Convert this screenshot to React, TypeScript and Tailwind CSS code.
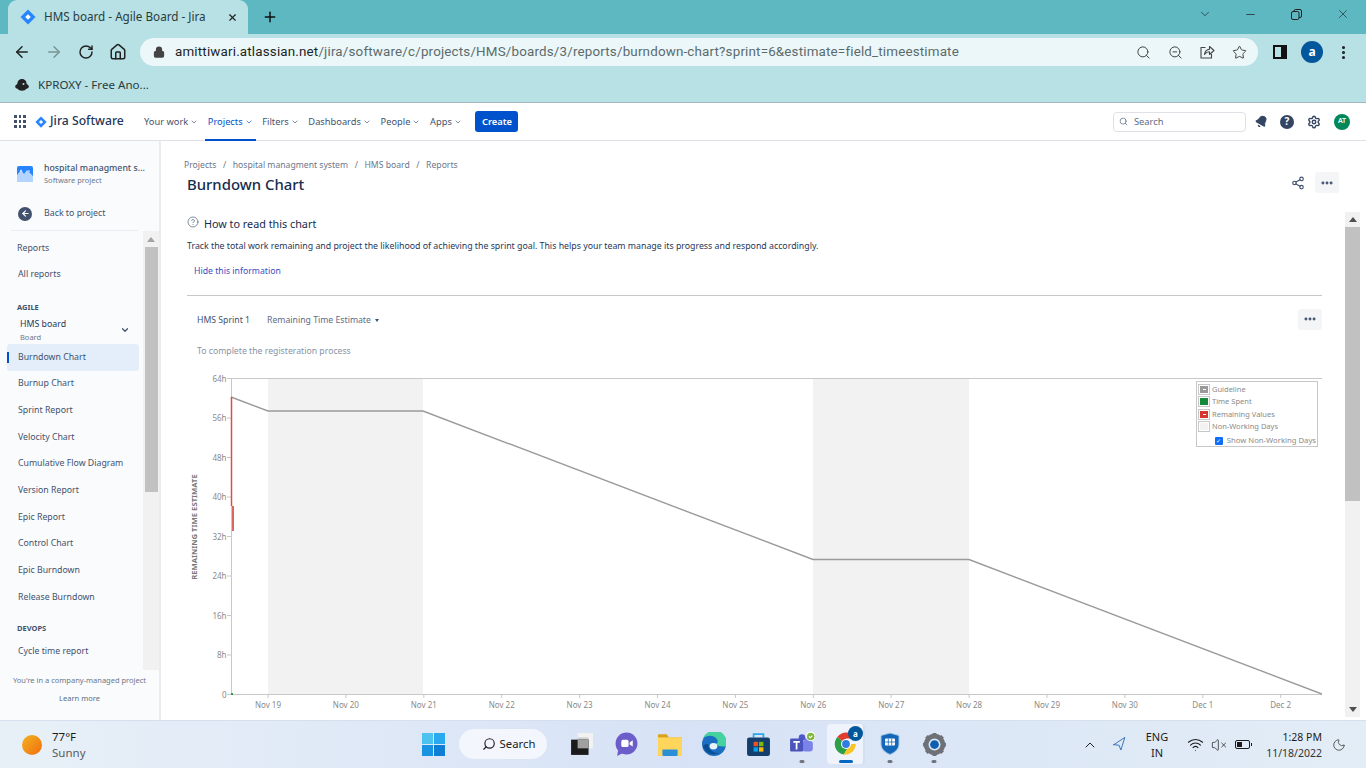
import React from 'react';
import { ArrowLeft, ArrowRight, RotateCw, Home, Lock, Search, ZoomOut, Star, MoreVertical, X, Plus, ChevronDown, ChevronUp, Minus, Share2, MoreHorizontal, Bell, Settings, HelpCircle, Wifi, VolumeX, Moon, Navigation } from 'lucide-react';

const F = "font-['Noto_Sans',sans-serif]";

function Diamond({ s = 16, c = '#2684ff' }: { s?: number; c?: string }) {
  return (
    <svg width={s} height={s} viewBox="0 0 16 16" className="shrink-0">
      <path d="M8 0.5 15.5 8 8 15.5 0.5 8Z" fill={c} />
      <path d="M8 5.2 10.8 8 8 10.8 5.2 8Z" fill="#fff" />
    </svg>
  );
}

function Tabs() {
  return (
    <div className="h-[34px] bg-[#5db8c2] flex items-end shrink-0">
      <div className="ml-[8px] w-[240px] h-[34px] bg-[#b7e1e5] rounded-t-[9px] flex items-center pl-[12px] pr-[10px]">
        <Diamond s={16} c="#2684ff" />
        <span className="ml-[8px] text-[11.7px] text-[#2a3b3d] flex-1 whitespace-nowrap">HMS board - Agile Board - Jira</span>
        <X size={11} strokeWidth={2.5} className="text-[#222]" />
      </div>
      <div className="h-[34px] flex items-center ml-[14px]">
        <Plus size={16} strokeWidth={2.2} className="text-[#111]" />
      </div>
      <div className="flex-1" />
      <div className="h-[34px] flex items-center text-[#222] pb-[6px]">
        <ChevronDown size={14} strokeWidth={1.2} />
        <Minus size={13} strokeWidth={1.4} className="ml-[32px]" />
        <svg width="11" height="11" viewBox="0 0 11 11" fill="none" stroke="#222" className="ml-[34px]"><rect x="0.5" y="2.5" width="7.5" height="8" rx="1.5" /><path d="M3 2.5V2a1.5 1.5 0 0 1 1.5-1.5H9A1.5 1.5 0 0 1 10.5 2v5A1.5 1.5 0 0 1 9 8.5H8" /></svg>
        <X size={14} strokeWidth={1.1} className="ml-[34px] mr-[16px]" />
      </div>
    </div>
  );
}

function Toolbar() {
  return (
    <div className="h-[34px] bg-[#b7e1e5] flex items-center shrink-0 pl-[13px] pt-[2px]">
      <ArrowLeft size={18} strokeWidth={2} className="text-[#222]" />
      <ArrowRight size={18} strokeWidth={2} className="text-[#7b9294] ml-[14px]" />
      <RotateCw size={16} strokeWidth={2.2} className="text-[#222] ml-[15px]" />
      <Home size={18} strokeWidth={2} className="text-[#222] ml-[15px]" />
      <div className="ml-[13px] w-[1118px] h-[28px] bg-[#ebf7f8] rounded-full flex items-center pl-[13px] pr-[11px] shrink-0">
        <Lock size={12} strokeWidth={2.5} className="text-[#444]" fill="#444" />
        <span className="ml-[10px] text-[13.4px] whitespace-nowrap flex-1 font-['Roboto',sans-serif] tracking-[0.17px] text-[#5c6b6d]">
          <span className="text-[#1c2526]">amittiwari.atlassian.net</span>/jira/software/c/projects/HMS/boards/3/reports/burndown-chart?sprint=6&amp;estimate=field_timeestimate
        </span>
        <Search size={15} strokeWidth={1.6} className="text-[#444]" />
        <ZoomOut size={15} strokeWidth={1.6} className="text-[#444] ml-[17px]" />
        <svg width="16" height="16" viewBox="0 0 16 16" fill="none" stroke="#444" strokeWidth="1.1" strokeLinejoin="round" className="ml-[16px]"><path d="M6.5 3.5H2v10.5h10.5V10" /><path d="M5.5 10.5C6 7.5 8 5.5 10.5 5.3V2.5l4.5 4-4.5 4V7.8c-2 0-3.8 1-5 2.7Z" /></svg>
        <Star size={15} strokeWidth={1.6} className="text-[#444] ml-[17px]" />
      </div>
      <div className="ml-[15px] w-[14px] h-[14px] border-[2px] border-[#111] border-r-[6px] shrink-0" />
      <div className="ml-[14px] w-[22px] h-[22px] rounded-full bg-[#01579b] text-white text-[12px] font-bold flex items-center justify-center shrink-0">a</div>
      <MoreVertical size={17} strokeWidth={2.4} className="text-[#222] ml-[12px] shrink-0" />
    </div>
  );
}

function Bookmarks() {
  return (
    <div className="h-[35px] bg-[#b7e1e5] border-b border-[#9fb9bc] flex items-center shrink-0 pl-[15px]">
      <svg width="14" height="12" viewBox="0 0 14 12"><path d="M7 0C3.8 0 2.4 2.4 2.4 5 1.2 5.4.2 6.4.2 7.8c0 1.2 1.4 1.8 2.4 2 .6 1.2 2.4 2 4.4 2s3.6-.8 4.4-2c1-.2 2.4-.8 2.4-2 0-1.4-1-2.4-2.2-2.8C11.6 2.4 10.2 0 7 0Z" fill="#222" /><circle cx="8.5" cy="5" r="1" fill="#b7e1e5" /></svg>
      <span className="ml-[9px] text-[11.6px] text-[#2a3b3d]">KPROXY - Free Ano...</span>
    </div>
  );
}

function JiraNav() {
  const items = ['Your work', 'Projects', 'Filters', 'Dashboards', 'People', 'Apps'];
  return (
    <div className="h-[38px] bg-white border-b border-[#dfe1e6] flex items-center shrink-0 relative">
      <div className="ml-[14px] grid grid-cols-3 gap-[2px]">
        {Array.from({ length: 9 }).map((_, i) => <div key={i} className="w-[2.7px] h-[2.7px] bg-[#42526e]" />)}
      </div>
      <div className="ml-[9px]"><Diamond s={12} c="#2684ff" /></div>
      <span className="ml-[3px] text-[12.2px] text-[#253858] font-medium w-[90px] whitespace-nowrap">Jira Software</span>
      <div className="flex items-stretch h-[38px] ml-[1px]">
        {items.map((t) => (
          <div key={t} className={`relative flex items-center pr-[6.6px] pl-[3px] pt-[1px] text-[9.3px] ${t === 'Projects' ? 'text-[#0052cc]' : 'text-[#42526e]'}`}>
            <span>{t}</span>
            <ChevronDown size={8} className="ml-[2px]" />
            {t === 'Projects' && <div className="absolute left-0 right-[3px] bottom-0 h-[2px] bg-[#0052cc]" />}
          </div>
        ))}
      </div>
      <div className="ml-[7px] w-[43px] h-[21px] rounded-[3px] bg-[#0052cc] text-white text-[9.3px] font-semibold flex items-center justify-center">Create</div>
      <div className="flex-1" />
      <div className="w-[133px] h-[20px] border-[1.5px] border-[#dfe1e6] rounded-[4px] flex items-center pl-[5px]">
        <Search size={9} className="text-[#5e6c84]" />
        <span className="ml-[6px] text-[9.3px] text-[#5e6c84]">Search</span>
      </div>
      <Bell size={13} fill="#344563" className="text-[#344563] ml-[9px] rotate-[30deg]" />
      <div className="ml-[12px] w-[14px] h-[14px] rounded-full bg-[#344563] text-white text-[10px] font-bold flex items-center justify-center">?</div>
      <Settings size={14} strokeWidth={2.4} className="text-[#344563] ml-[13px]" />
      <div className="ml-[13px] mr-[16px] w-[16px] h-[16px] rounded-full bg-[#00875a] text-white text-[7px] font-semibold flex items-center justify-center">AT</div>
    </div>
  );
}

function SideRow({ t, active }: { t: string; active?: boolean }) {
  return (
    <div className={`relative h-[26.65px] shrink-0 ml-[7px] w-[132px] flex items-center pl-[11px] text-[8.75px] text-[#42526e] rounded-[3px] whitespace-nowrap ${active ? 'bg-[#e4eefa]' : ''}`}>
      {active && <div className="absolute left-0 top-[8px] h-[11px] w-[2px] bg-[#0052cc]" />}
      {t}
    </div>
  );
}

function Sidebar() {
  const rows = ['Burnup Chart', 'Sprint Report', 'Velocity Chart', 'Cumulative Flow Diagram', 'Version Report', 'Epic Report', 'Control Chart', 'Epic Burndown', 'Release Burndown'];
  return (
    <div className="w-[161px] shrink-0 bg-[#fafbfc] border-r-[2px] border-[#ebecf0] flex flex-col">
      <div className="h-[57px] flex items-center pl-[17px] pt-[10px] shrink-0">
        <svg width="16" height="16" viewBox="0 0 16 16" className="mb-[2px]"><rect width="16" height="16" rx="2" fill="#2684ff" /><path d="M0 16V9L4 4l3 4 3-4 6 6v6Z" fill="#b3d4ff" /><path d="M3 5l1-1.5L5.5 6 4 5Zm8 0 1-1 1 2-1-.5Z" fill="#fff" /></svg>
        <div className="ml-[11px] leading-none">
          <div className="text-[8.75px] text-[#42526e] font-medium whitespace-nowrap">hospital managment s...</div>
          <div className="mt-[4px] text-[7.5px] text-[#6b778c]">Software project</div>
        </div>
      </div>
      <div className="h-[31px] flex items-center pl-[18px] shrink-0 mx-0">
        <div className="w-[14px] h-[14px] rounded-full bg-[#42526e] flex items-center justify-center"><ArrowLeft size={9} strokeWidth={3} className="text-white" /></div>
        <span className="ml-[12px] text-[8.8px] text-[#42526e]">Back to project</span>
      </div>
      <div className="ml-[11px] w-[127px] h-px bg-[#ebecf0] mt-[1px] shrink-0" />
      <div className="flex h-[439px] shrink-0">
        <div className="w-[143px] shrink-0 flex flex-col overflow-hidden">
          <div className="h-[5px] shrink-0" />
          <div className="h-[26px] shrink-0 flex items-center pl-[17px] text-[8.8px] text-[#42526e]">Reports</div>
          <div className="h-[26px] shrink-0 flex items-center pl-[18px] text-[8.8px] text-[#42526e]">All reports</div>
          <div className="h-[14px] shrink-0" />
          <div className="h-[12px] shrink-0 flex items-center pl-[17px] text-[7.5px] font-bold text-[#42526e]">AGILE</div>
          <div className="h-[30px] shrink-0 pl-[20px] pt-[2px] relative">
            <div className="text-[8.8px] text-[#253858] leading-[16px]">HMS board</div>
            <div className="text-[7.5px] text-[#6b778c] leading-[11px] mt-0">Board</div>
            <ChevronDown size={10} strokeWidth={3} className="absolute right-[13px] top-[11px] text-[#42526e]" />
          </div>
          <SideRow t="Burndown Chart" active />
          {rows.map((r) => <SideRow key={r} t={r} />)}
          <div className="h-[9px] shrink-0" />
          <div className="h-[19px] shrink-0 flex items-center pl-[17px] text-[7.5px] font-bold text-[#42526e]">DEVOPS</div>
          <SideRow t="Cycle time report" />
        </div>
        <div className="w-[16px] bg-[#f1f1f1] flex flex-col items-center">
          <div className="h-[16px] flex items-center"><div className="w-0 h-0 border-x-[4px] border-x-transparent border-b-[5px] border-b-[#a3a3a3]" /></div>
          <div className="w-[13px] ml-[1px] h-[245px] bg-[#c1c1c1]" />
        </div>
      </div>
      <div className="flex-1 flex flex-col items-center">
        <div className="mt-[5px] text-[7.5px] text-[#6b778c] whitespace-nowrap">You're in a company-managed project</div>
        <div className="mt-[7px] text-[7.5px] text-[#5e6c84]">Learn more</div>
      </div>
    </div>
  );
}

const xLabels = ['Nov 19', 'Nov 20', 'Nov 21', 'Nov 22', 'Nov 23', 'Nov 24', 'Nov 25', 'Nov 26', 'Nov 27', 'Nov 28', 'Nov 29', 'Nov 30', 'Dec 1', 'Dec 2'];
const yLabels = ['64h', '56h', '48h', '40h', '32h', '24h', '16h', '8h', '0'];

function Chart() {
  return (
    <svg width="1140" height="350" viewBox="187 370 1140 350" className="block shrink-0" fontFamily="Noto Sans, sans-serif">
      <rect x="268" y="378" width="155" height="316" fill="#f2f2f2" />
      <rect x="813" y="378" width="156" height="316" fill="#f2f2f2" />
      <rect x="231.5" y="378.5" width="1091" height="316" fill="none" stroke="#c8c8c8" />
      {yLabels.map((l, i) => {
        const y = 378.5 + i * 39.5;
        return (
          <g key={l}>
            <line x1="227" x2="231" y1={y} y2={y} stroke="#c8c8c8" />
            <text x="226.5" y={y + 3} textAnchor="end" fontSize="8" fill="#8a8a8a">{l}</text>
          </g>
        );
      })}
      {xLabels.map((l, i) => {
        const x = 268 + i * 77.9;
        return (
          <g key={l}>
            <line x1={x} x2={x} y1="694" y2="698" stroke="#c8c8c8" />
            <text x={x} y="708" textAnchor="middle" fontSize="8" fill="#8a8a8a">{l}</text>
          </g>
        );
      })}
      <text transform="translate(197 527) rotate(-90)" textAnchor="middle" fontSize="7.7" fontWeight="700" fill="#777">REMAINING TIME ESTIMATE</text>
      <polyline points="231,397 268,411 423,411 813,559.5 969,559.5 1322,694" fill="none" stroke="#9a9a9a" strokeWidth="1.4" />
      <path d="M231.5 397V506" stroke="#dc4f48" strokeWidth="1.5" fill="none" />
      <path d="M233 506V531" stroke="#d9685f" strokeWidth="2" fill="none" />
      <rect x="231" y="693" width="2" height="2" fill="#22a04a" />
    </svg>
  );
}

function LegendRow({ c, mark, t }: { c: string; mark?: boolean; t: string }) {
  return (
    <div className="flex items-center h-[12.5px]">
      <div className="w-[12px] h-[11px] border border-[#c8c8c8] p-px">
        <div className="w-full h-full flex items-center justify-center" style={{ background: c }}>
          {mark && <div className="w-[3px] h-px bg-white" />}
        </div>
      </div>
      <span className="ml-[2px] text-[7.5px] text-[#8a8a8a] whitespace-nowrap">{t}</span>
    </div>
  );
}

function Main() {
  return (
    <div className={`flex-1 bg-white flex flex-col min-w-0`}>
      <div className="h-[71px] shrink-0 pl-[23px] pr-[27px] relative">
        <div className="pt-[18px] text-[8.65px] text-[#6b778c] leading-[12px] whitespace-nowrap">
          Projects<span className="mx-[6.6px]">/</span>hospital managment system<span className="mx-[6.6px]">/</span>HMS board<span className="mx-[6.6px]">/</span>Reports
        </div>
        <div className="ml-[3px] mt-[3px] text-[14.9px] leading-[20px] font-medium text-[#172b4d]">Burndown Chart</div>
        <Share2 size={14} className="absolute right-[61px] top-[35px] text-[#42526e]" />
        <div className="absolute right-[27px] top-[31px] w-[24px] h-[21px] bg-[#f4f5f7] rounded-[3px] flex items-center justify-center"><MoreHorizontal size={14} strokeWidth={3} className="text-[#42526e]" /></div>
      </div>
      <div className="flex-1 flex min-h-0 overflow-hidden">
        <div className="w-[1161px] shrink-0 pl-[26px] flex flex-col overflow-hidden">
          <div className="h-[22px] flex items-center shrink-0 relative top-[1px]">
            <HelpCircle size={12} strokeWidth={1.3} className="text-[#42526e] mb-[5px]" />
            <span className="ml-[5px] text-[10.8px] text-[#172b4d]">How to read this chart</span>
          </div>
          <div className="mt-[3px] h-[20px] flex items-center text-[8.79px] text-[#253858] whitespace-nowrap shrink-0">Track the total work remaining and project the likelihood of achieving the sprint goal. This helps your team manage its progress and respond accordingly.</div>
          <div className="h-[30px] flex items-center pl-[7px] text-[8.7px] text-[#3a4fc4] shrink-0">Hide this information</div>
          <div className="mt-[8px] w-[1135px] h-px bg-[#c8c8c8] shrink-0" />
          <div className="h-[46px] w-[1135px] pl-[10px] flex items-center shrink-0 text-[8.7px] text-[#42526e]">
            <span className="mt-[3px]">HMS Sprint 1</span>
            <span className="mt-[3px] ml-[17px] text-[#5e6c84]">Remaining Time Estimate</span>
            <div className="mt-[3px] ml-[4px] w-0 h-0 border-x-[2.5px] border-x-transparent border-t-[3px] border-t-[#42526e]" />
            <div className="ml-auto w-[24px] h-[21px] bg-[#f4f5f7] rounded-[3px] flex items-center justify-center"><MoreHorizontal size={14} strokeWidth={3} className="text-[#42526e]" /></div>
          </div>
          <div className="h-[17px] pl-[10px] pt-[2px] flex items-center text-[8.7px] text-[#8993a4] shrink-0 mt-0">To complete the registeration process</div>
          <div className="relative mt-[11px] shrink-0">
            <Chart />
            <div className="absolute left-[1009px] top-[11px] w-[122px] h-[66px] bg-white border border-[#c8c8c8] px-[1px] pt-[1px]">
              <LegendRow c="#999" mark t="Guideline" />
              <LegendRow c="#15893a" t="Time Spent" />
              <LegendRow c="#d8352f" mark t="Remaining Values" />
              <LegendRow c="#f2f2f2" t="Non-Working Days" />
              <div className="flex items-center ml-[17px] mt-[2px]">
                <div className="w-[8px] h-[8px] bg-[#0d6efd] rounded-[1px] flex items-center justify-center text-white text-[6px] leading-none">✓</div>
                <span className="ml-[4px] text-[7.7px] text-[#8a8a8a] whitespace-nowrap">Show Non-Working Days</span>
              </div>
            </div>
          </div>
        </div>
        <div className="w-[15px] ml-[23px] h-[505px] bg-[#f1f1f1] shrink-0 flex flex-col items-center">
          <div className="h-[15px] flex items-center"><div className="w-0 h-0 border-x-[4px] border-x-transparent border-b-[5px] border-b-[#505050]" /></div>
          <div className="w-full h-[274px] bg-[#c1c1c1]" />
          <div className="flex-1" />
          <div className="h-[15px] flex items-center"><div className="w-0 h-0 border-x-[4px] border-x-transparent border-t-[5px] border-t-[#505050]" /></div>
        </div>
      </div>
    </div>
  );
}

function TaskDot({ on }: { on?: boolean }) {
  return <div className={`absolute bottom-[1px] left-1/2 -translate-x-1/2 h-[3px] rounded-full ${on ? 'w-[14px] bg-[#0067c0]' : 'w-[5px] bg-[#70757d]'}`} />;
}

function Taskbar() {
  const ic = 'relative w-[44px] h-[40px] flex items-center justify-center';
  return (
    <div className="h-[48px] shrink-0 bg-gradient-to-r from-[#e8f0f7] via-[#d7e2f6] to-[#e3edf6] flex items-center relative border-t border-[#d5dfee] font-['Noto_Sans',sans-serif]">
      <div className="ml-[22px] w-[20px] h-[20px] rounded-full bg-gradient-to-br from-[#f2b221] to-[#ef6c0c]" />
      <div className="ml-[10px] leading-[16px]">
        <div className="text-[11.5px] text-[#1c1c1c]">77°F</div>
        <div className="text-[11.5px] text-[#5a5a5a]">Sunny</div>
      </div>
      <div className="absolute left-[411px] top-[3px] flex items-center h-[40px]">
        <div className={ic}>
          <div className="grid grid-cols-2 gap-[1px]">
            <div className="w-[11px] h-[11px] bg-[#4cc2f1]" /><div className="w-[11px] h-[11px] bg-[#2aa9ee]" /><div className="w-[11px] h-[11px] bg-[#1b93e3]" /><div className="w-[11px] h-[11px] bg-[#0f7fd6]" />
          </div>
        </div>
        <div className="ml-[4px] w-[88px] h-[30px] rounded-full bg-[#f3f6fd] flex items-center justify-center pl-[11px] text-[#222]">
          <Search size={14} className="-scale-x-100" />
          <span className="ml-[4px] text-[11.3px]">Search</span>
        </div>
        <div className={`${ic} ml-[13px]`}>
          <svg width="24" height="24" viewBox="0 0 22 22"><rect x="7" y="1" width="14" height="14" fill="#f2f2f2" /><rect x="7" y="5" width="10" height="10" fill="#cfcfcf" /><rect x="1" y="7" width="16" height="14" fill="#1b1b1b" /><rect x="7" y="7" width="10" height="8" fill="#a0a0a0" /></svg>
        </div>
        <div className={`${ic}`}>
          <svg width="23" height="25" viewBox="0 0 22 24"><circle cx="11" cy="11" r="10.5" fill="#6b5ecb" /><path d="M3 17l-1 6 6-3Z" fill="#6b5ecb" /><rect x="6" y="7.5" width="7" height="7" rx="1.5" fill="#fff" /><path d="M14 10l3-2v6l-3-2Z" fill="#fff" /></svg>
        </div>
        <div className={`${ic}`}>
          <svg width="24" height="23" viewBox="0 0 22 21"><path d="M0 2a1 1 0 0 1 1-1h7l2 3h12v16a1 1 0 0 1-1 1H1a1 1 0 0 1-1-1Z" fill="#d9a21b" /><rect y="4" width="22" height="17" fill="#ffd55c" /><rect x="4" y="15" width="14" height="6" rx="1" fill="#2a8fd6" /></svg>
        </div>
        <div className={`${ic}`}>
          <svg width="24" height="24" viewBox="0 0 22 22"><circle cx="11" cy="11" r="11" fill="#1b6fc2" /><path d="M22 13A11 11 0 0 0 1 6c3-3 10-4 13 1 1 2 0 4-2 4.5 2 1 6 2.5 10 1.5Z" fill="#45d29e" /><path d="M6 12c0 5 5 8 10 7-5 3-13 1-15-6 1-2 4-3 5-1Z" fill="#0c4d94" /><ellipse cx="10.5" cy="13" rx="3.5" ry="3" fill="#e7f3fb" /></svg>
        </div>
        <div className={`${ic}`}>
          <svg width="23" height="24" viewBox="0 0 21 22"><path d="M6 5V2h9v3" fill="none" stroke="#28a8ea" strokeWidth="1.6" /><rect y="5" width="21" height="17" rx="2" fill="#123f6e" /><rect x="6" y="9" width="4" height="4" fill="#f25022" /><rect x="11" y="9" width="4" height="4" fill="#7fba00" /><rect x="6" y="14" width="4" height="4" fill="#00a4ef" /><rect x="11" y="14" width="4" height="4" fill="#ffb900" /></svg>
        </div>
        <div className={`${ic}`}>
          <svg width="26" height="26" viewBox="0 0 24 24"><circle cx="17" cy="9" r="3" fill="#7b83eb" /><rect x="12" y="9" width="10" height="10" rx="3" fill="#7b83eb" /><circle cx="12" cy="6" r="3" fill="#5059c9" /><rect x="1" y="7" width="12" height="12" rx="1" fill="#4b53bc" /><path d="M4 10h6M7 10v7" stroke="#fff" strokeWidth="1.6" /><circle cx="20" cy="5" r="4.5" fill="#fff" /><circle cx="20" cy="5" r="3.5" fill="#7db93c" /><path d="M18.4 5l1.2 1.2 2-2" stroke="#fff" fill="none" /></svg>
          <TaskDot />
        </div>
        <div className={`${ic}`}>
          <div className="absolute inset-y-0 left-[3px] right-[3px] bg-[#eef3fc] rounded-[4px] border-r-[2px] border-[#d5deee]" />
          <svg width="26" height="26" viewBox="0 0 24 24" className="relative"><path d="M12 12 4 5.5A10 10 0 0 1 21 7H12Z" fill="#e33b2e" /><path d="M12 12 4 5.5A10 10 0 0 0 10 21.8L14 15Z" fill="#2d9f46" /><path d="M12 12h9a10 10 0 0 1-11 9.8L14 15Z" fill="#f7c325" /><circle cx="12" cy="12" r="4.6" fill="#fff" /><circle cx="12" cy="12" r="3.6" fill="#2f7de1" /></svg>
          <div className="absolute right-[5px] top-[2px] w-[15px] h-[15px] rounded-full bg-[#01579b] text-white text-[8px] font-bold flex items-center justify-center">a</div>
          <TaskDot on />
        </div>
        <div className={`${ic}`}>
          <svg width="20" height="24" viewBox="0 0 20 24"><path d="M10 1 19 3.5V12c0 5-4 8.5-9 10.5C5 20.5 1 17 1 12V3.5Z" fill="#1467b8" stroke="#a6c8e6" /><rect x="5" y="6.5" width="10" height="7" rx="1" fill="#fff" /><path d="M5 10h10M8.3 6.5v7M11.7 6.5v7" stroke="#1467b8" strokeWidth=".8" /></svg>
          <TaskDot />
        </div>
        <div className={`${ic}`}>
          <svg width="25" height="25" viewBox="0 0 24 24"><circle cx="12" cy="12" r="8" fill="none" stroke="#6e7278" strokeWidth="4.5" /><path d="M12 1v4M12 19v4M1 12h4M19 12h4M4.2 4.2 7 7M17 17l2.8 2.8M4.2 19.8 7 17M17 7l2.8-2.8" stroke="#6e7278" strokeWidth="3.6" /><circle cx="12" cy="12" r="4.2" fill="#0f5fb0" /></svg>
          <TaskDot />
        </div>
      </div>
      <div className="flex-1" />
      <ChevronUp size={16} strokeWidth={1.5} className="text-[#222]" />
      <Navigation size={15} strokeWidth={1.3} className="text-[#1f63b5] ml-[14px] rotate-[-8deg]" />
      <div className="ml-[18px] w-[24px] text-center text-[11px] leading-[16px] text-[#1c1c1c]">ENG<br />IN</div>
      <Wifi size={17} strokeWidth={1.5} className="text-[#1c1c1c] ml-[18px]" />
      <VolumeX size={16} strokeWidth={1.1} className="text-[#1c1c1c] ml-[7px]" />
      <div className="ml-[8px] w-[15px] h-[9px] border border-[#1c1c1c] rounded-[2px] p-px relative"><div className="w-[5px] h-full bg-[#1c1c1c]" /><div className="absolute -right-[3px] top-[2px] w-[1.5px] h-[3px] bg-[#1c1c1c]" /></div>
      <div className="ml-[12px] w-[60px] text-right text-[10.5px] leading-[16px] text-[#1c1c1c] whitespace-nowrap">1:28 PM<br /><span className="text-[#333]">11/18/2022</span></div>
      <Moon size={14} strokeWidth={1.2} className="text-[#222] ml-[10px] mr-[20px]" />
    </div>
  );
}

export default function App() {
  return (
    <div className={`w-[1366px] h-[768px] flex flex-col overflow-hidden bg-white ${F}`}>
      <Tabs />
      <Toolbar />
      <Bookmarks />
      <JiraNav />
      <div className="flex-1 flex min-h-0">
        <Sidebar />
        <Main />
      </div>
      <Taskbar />
    </div>
  );
}
